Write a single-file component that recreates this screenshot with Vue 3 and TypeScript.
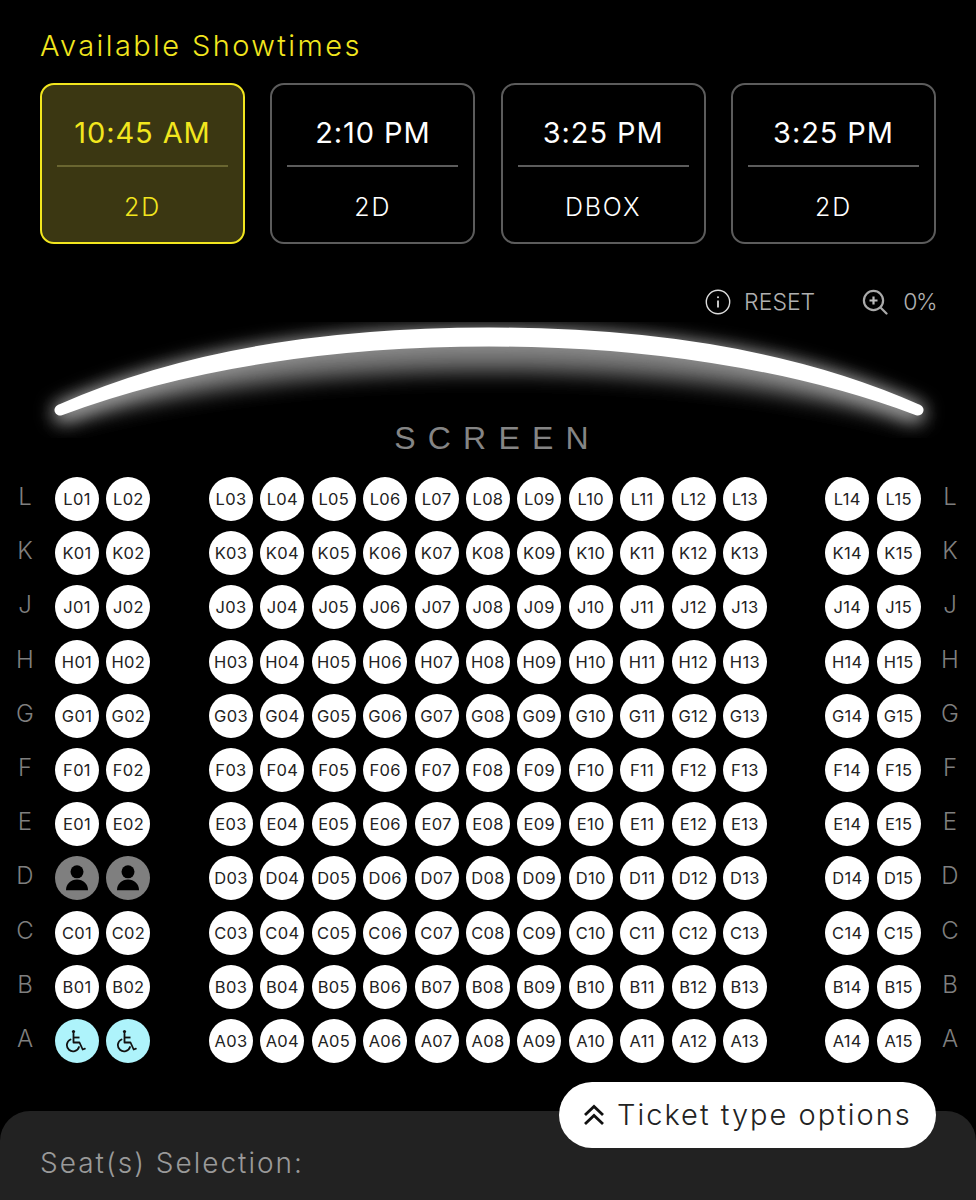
<script setup lang="ts">
interface Show { time: string; kind: string; active?: boolean }
const shows: Show[] = [
  { time: '10:45 AM', kind: '2D', active: true },
  { time: '2:10 PM', kind: '2D' },
  { time: '3:25 PM', kind: 'DBOX' },
  { time: '3:25 PM', kind: '2D' },
]
const rows = ['L', 'K', 'J', 'H', 'G', 'F', 'E', 'D', 'C', 'B', 'A']
const blocks = [[1, 2], [3, 4, 5, 6, 7, 8, 9, 10, 11, 12, 13], [14, 15]]
const code = (r: string, n: number) => r + String(n).padStart(2, '0')
const state = (r: string, n: number) => {
  if (n > 2) return 'free'
  if (r === 'D') return 'taken'
  if (r === 'A') return 'access'
  return 'free'
}
</script>

<template>
  <div class="page">
    <h1 class="title">Available Showtimes</h1>
    <div class="shows">
      <div v-for="(s, i) in shows" :key="i" class="show" :class="{ active: s.active }">
        <div class="time">{{ s.time }}</div>
        <div class="kind">{{ s.kind }}</div>
      </div>
    </div>

    <div class="tools">
      <div class="tool reset">
        <svg width="26" height="26" viewBox="0 0 26 26" fill="none" stroke="#ddd" stroke-width="1.4">
          <circle cx="13" cy="13" r="11.7" />
          <path d="M13 11.5v7" stroke-width="1.8" />
          <circle cx="13" cy="8.2" r="1" fill="#ddd" stroke="none" />
        </svg>
        <span>RESET</span>
      </div>
      <div class="tool zoom">
        <svg width="26" height="26" viewBox="0 0 26 26" fill="none" stroke="#aaa" stroke-width="2.2">
          <circle cx="11.5" cy="11.5" r="9.6" />
          <path d="M18.5 18.5l6 6" stroke-linecap="round" />
          <path d="M7.5 11.5h8M11.5 7.5v8" stroke="#bbb" />
        </svg>
        <span>0%</span>
      </div>
    </div>

    <svg class="screen" width="976" height="116" viewBox="0 0 976 116" fill="none">
      <defs>
        <filter id="soft" x="-10%" y="-60%" width="120%" height="220%"><feGaussianBlur stdDeviation="10" /></filter>
        <filter id="halo" x="-10%" y="-60%" width="120%" height="220%"><feGaussianBlur stdDeviation="9" /></filter>
        <filter id="edge" x="-5%" y="-20%" width="110%" height="140%"><feGaussianBlur stdDeviation="0.7" /></filter>
      </defs>
      <path d="M60 88C190 32 340 16 489 16S790 32 918 88L918 102C790 66 640 50 489 50S190 66 60 102Z" fill="#707070" filter="url(#soft)" />
      <path d="M61 90C190 32 340 15 489 15S790 32 917 90" stroke="#fff" stroke-opacity="0.55" stroke-width="18" stroke-linecap="round" filter="url(#halo)" />
      <path d="M60 88C190 30 340 11 489 11S788 30 918 88C790 40 640 19 489 19S188 40 60 88Z" fill="#fff" stroke="#fff" stroke-width="11" stroke-linejoin="round" filter="url(#edge)" />
    </svg>
    <div class="screen-label">SCREEN</div>

    <div class="hall">
      <div v-for="r in rows" :key="r" class="row">
        <span class="letter">{{ r }}</span>
        <div v-for="(b, bi) in blocks" :key="bi" class="block" :class="'block' + bi">
          <div v-for="n in b" :key="n" class="seat" :class="state(r, n)">
            <svg v-if="state(r, n) === 'taken'" width="34" height="34" viewBox="0 0 34 34" fill="#000">
              <circle cx="17" cy="10.8" r="6.5" />
              <path d="M6 29.2c0-6.5 5-10.7 11-10.7s11 4.2 11 10.7Z" />
            </svg>
            <svg v-else-if="state(r, n) === 'access'" width="24" height="24" viewBox="2 0 24 24" fill="none" stroke="#111" stroke-width="1.8">
              <circle cx="10.5" cy="2.6" r="1.6" fill="#111" stroke="none" />
              <path d="M10.5 4.5v9h6l3.2 7 2.2-.8" stroke-linecap="round" stroke-linejoin="round" />
              <path d="M10.5 8.5h6" />
              <path d="M7.5 10.5a6.2 6.2 0 1 0 8.5 7.5" stroke-linecap="round" />
            </svg>
            <template v-else>{{ code(r, n) }}</template>
          </div>
        </div>
        <span class="letter end">{{ r }}</span>
      </div>
    </div>

    <div class="sheet">
      <div class="sheet-title">Seat(s) Selection:</div>
      <button class="ticket" type="button">
        <svg width="24" height="24" viewBox="0 0 24 24" fill="none" stroke="#111" stroke-width="2.8">
          <path d="M3 12l9-8.5 9 8.5M3 21l9-8.5 9 8.5" />
        </svg>
        <span>Ticket type options</span>
      </button>
    </div>
  </div>
</template>

<style>
html, body { margin: 0; background: #000; }
</style>

<style scoped>
.page {
  width: 976px;
  height: 1200px;
  overflow: hidden;
  background: #000;
  font-family: "Inter", "Liberation Sans", sans-serif;
  color: #fff;
}
.title {
  margin: 0;
  padding: 28px 40px 0;
  height: 55px;
  box-sizing: border-box;
  font-size: 29px;
  line-height: 36px;
  font-weight: 300;
  color: #f2e61e;
  letter-spacing: 2.4px;
  white-space: nowrap;
}
.shows {
  display: grid;
  grid-template-columns: repeat(4, 205px);
  gap: 25.33px;
  padding: 28px 40px 0;
}
.show {
  height: 161px;
  box-sizing: border-box;
  border: 2px solid #5c5c5c;
  border-radius: 14px;
  padding: 0 15px;
  text-align: center;
}
.time {
  height: 80px;
  line-height: 95px;
  font-size: 29px;
  font-weight: 400;
  letter-spacing: 0.9px;
  border-bottom: 2px solid #5c5c5c;
}
.kind {
  line-height: 80px;
  font-size: 25px;
  font-weight: 300;
  letter-spacing: 1.8px;
}
.show.active {
  border-color: #f2e61e;
  background: #3b3712;
  color: #f2e61e;
}
.show.active .time { border-bottom-color: #6a6630; }
.tools {
  display: flex;
  justify-content: flex-end;
  gap: 47px;
  padding: 43px 40px 0;
  height: 70px;
  box-sizing: border-box;
}
.tool {
  display: flex;
  align-items: center;
  height: 30px;
  font-size: 23px;
  font-weight: 300;
  color: #b0b0b0;
  gap: 13px;
}
.zoom { gap: 14px; }
.zoom span { letter-spacing: -1.5px; margin-left: 1px; }
.screen {
  display: block;
  margin-top: 8px;
}
.screen-label {
  margin-top: -22px;
  height: 44px;
  line-height: 44px;
  text-align: center;
  padding-left: 19px;
  font-family: "Liberation Sans", sans-serif;
  font-size: 32px;
  font-weight: 400;
  letter-spacing: 12.2px;
  color: #858585;
}
.hall {
  display: flex;
  flex-direction: column;
  gap: 10.2px;
  padding-top: 17px;
}
.row {
  position: relative;
  display: flex;
  height: 44px;
  padding-left: 55px;
}
.letter {
  position: absolute;
  left: 0;
  top: 0;
  width: 50px;
  text-align: center;
  line-height: 40px;
  font-size: 24px;
  font-weight: 300;
  color: #7f7f7f;
}
.letter.end { left: 925px; }
.block {
  display: flex;
  gap: 7.4px;
}
.block1 { margin-left: 58.6px; }
.block2 { margin-left: 58.4px; }
.seat {
  width: 44px;
  height: 44px;
  border-radius: 50%;
  background: #fff;
  color: #222;
  display: flex;
  align-items: center;
  justify-content: center;
  font-size: 16.5px;
  letter-spacing: 0.3px;
  font-weight: 400;
  flex: none;
}
.seat.taken { background: #7f7f7f; }
.seat.access { background: #aef3fb; }
.sheet {
  position: relative;
  margin-top: 48px;
  height: 200px;
  background: #222;
  border-radius: 30px 30px 0 0;
}
.sheet-title {
  padding: 34px 40px 0;
  font-size: 28px;
  line-height: 36px;
  font-weight: 300;
  color: #9a9a9a;
  letter-spacing: 2px;
}
.ticket {
  position: absolute;
  top: -29px;
  right: 40px;
  width: 377px;
  height: 66px;
  border: none;
  border-radius: 33px;
  background: #fff;
  color: #222;
  display: flex;
  align-items: center;
  gap: 11px;
  padding: 0 0 0 23px;
  font-family: inherit;
  font-size: 29px;
  font-weight: 300;
  letter-spacing: 2px;
  white-space: nowrap;
}
</style>
